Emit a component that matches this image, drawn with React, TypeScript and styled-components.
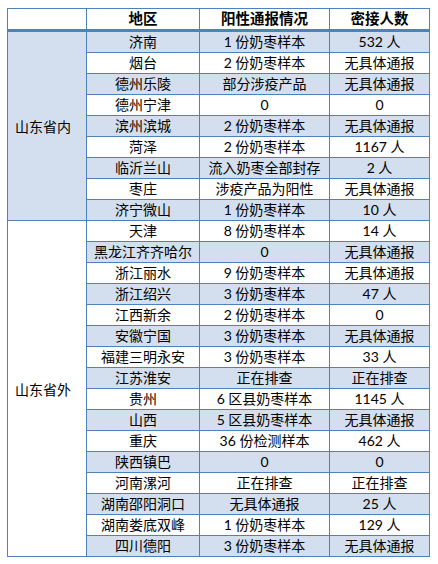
import React from "react";
import styled, { createGlobalStyle } from "styled-components";

const Global = createGlobalStyle`
  html, body { margin: 0; padding: 0; background: #ffffff; }
  body { padding: 8px 0 0 7px; font-family: "Lato", "Noto Sans CJK SC", sans-serif; }
`;

const BORDER = "#4F81BD";
const FILL = "#D3DFEE";

const Table = styled.table`
  border-collapse: collapse;
  table-layout: fixed;
  width: 423px;
  font-family: "Lato", "Noto Sans CJK SC", sans-serif;
  font-size: 14px;
  color: #000;
`;

const HeadCell = styled.th<{ $w: number }>`
  width: ${(p) => p.$w}px;
  height: 20px;
  padding: 0;
  border: 1px solid ${BORDER};
  border-bottom: 3px solid ${BORDER};
  font-weight: 700;
  font-size: 14.5px;
  line-height: 20px;
  text-align: center;
  background: #ffffff;
`;

const Cell = styled.td<{ $shade: boolean }>`
  height: 20px;
  padding: 0;
  border: 1px solid ${BORDER};
  line-height: 20px;
  text-align: center;
  white-space: nowrap;
  background: ${(p) => (p.$shade ? FILL : "#ffffff")};
`;

const GroupCell = styled.td<{ $shade: boolean }>`
  padding: 0 0 0 7px;
  border: 1px solid ${BORDER};
  text-align: left;
  vertical-align: middle;
  font-size: 14px;
  background: ${(p) => (p.$shade ? FILL : "#ffffff")};
`;

type Row = [string, string, string];

const groups: { name: string; shade: boolean; rows: Row[] }[] = [
  {
    name: "山东省内",
    shade: true,
    rows: [
      ["济南", "1 份奶枣样本", "532 人"],
      ["烟台", "2 份奶枣样本", "无具体通报"],
      ["德州乐陵", "部分涉疫产品", "无具体通报"],
      ["德州宁津", "0", "0"],
      ["滨州滨城", "2 份奶枣样本", "无具体通报"],
      ["菏泽", "2 份奶枣样本", "1167 人"],
      ["临沂兰山", "流入奶枣全部封存", "2 人"],
      ["枣庄", "涉疫产品为阳性", "无具体通报"],
      ["济宁微山", "1 份奶枣样本", "10 人"],
    ],
  },
  {
    name: "山东省外",
    shade: false,
    rows: [
      ["天津", "8 份奶枣样本", "14 人"],
      ["黑龙江齐齐哈尔", "0", "无具体通报"],
      ["浙江丽水", "9 份奶枣样本", "无具体通报"],
      ["浙江绍兴", "3 份奶枣样本", "47 人"],
      ["江西新余", "2 份奶枣样本", "0"],
      ["安徽宁国", "3 份奶枣样本", "无具体通报"],
      ["福建三明永安", "3 份奶枣样本", "33 人"],
      ["江苏淮安", "正在排查", "正在排查"],
      ["贵州", "6 区县奶枣样本", "1145 人"],
      ["山西", "5 区县奶枣样本", "无具体通报"],
      ["重庆", "36 份检测样本", "462 人"],
      ["陕西镇巴", "0", "0"],
      ["河南漯河", "正在排查", "正在排查"],
      ["湖南邵阳洞口", "无具体通报", "25 人"],
      ["湖南娄底双峰", "1 份奶枣样本", "129 人"],
      ["四川德阳", "3 份奶枣样本", "无具体通报"],
    ],
  },
];

export default function App() {
  let idx = 0;
  return (
    <>
      <Global />
      <Table>
        <thead>
          <tr>
            <HeadCell $w={78}></HeadCell>
            <HeadCell $w={112}>地区</HeadCell>
            <HeadCell $w={129}>阳性通报情况</HeadCell>
            <HeadCell $w={99}>密接人数</HeadCell>
          </tr>
        </thead>
        <tbody>
          {groups.map((g) =>
            g.rows.map((r, i) => {
              const shade = idx % 2 === 0;
              idx++;
              return (
                <tr key={r[0]}>
                  {i === 0 && (
                    <GroupCell rowSpan={g.rows.length} $shade={g.shade}>
                      {g.name}
                    </GroupCell>
                  )}
                  <Cell $shade={shade}>{r[0]}</Cell>
                  <Cell $shade={shade}>{r[1]}</Cell>
                  <Cell $shade={shade}>{r[2]}</Cell>
                </tr>
              );
            })
          )}
        </tbody>
      </Table>
    </>
  );
}
